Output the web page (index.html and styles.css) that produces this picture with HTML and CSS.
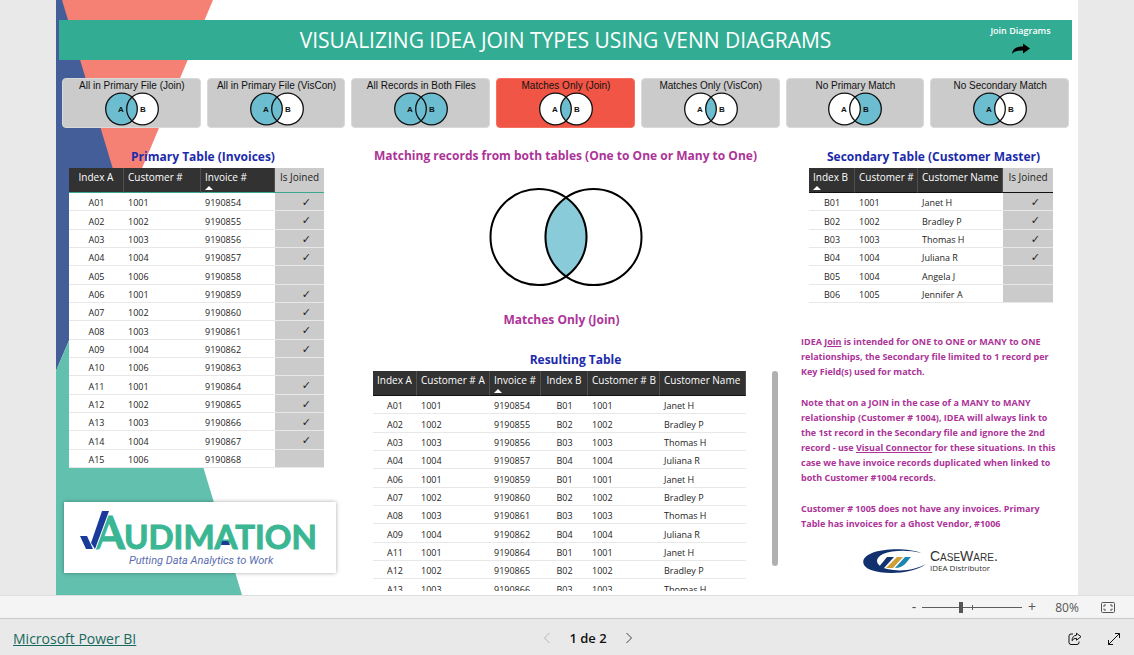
FILE: index.html
```html
<!DOCTYPE html>
<html lang="en">
<head>
<meta charset="utf-8">
<meta name="viewport" content="width=device-width, initial-scale=1">
<title>Visualizing IDEA Join Types</title>
<link rel="stylesheet" href="styles.css">
</head>
<body>
<svg class="defs" aria-hidden="true">
  <symbol id="venn" viewBox="0 0 56 34">
    <circle class="set-a" cx="17.5" cy="17" r="15.8"/>
    <circle class="set-b" cx="38.5" cy="17" r="15.8"/>
    <path class="both" d="M28 5.2A15.8 15.8 0 0 1 28 28.8A15.8 15.8 0 0 1 28 5.2Z"/>
    <circle class="ring" cx="17.5" cy="17" r="15.8"/>
    <circle class="ring" cx="38.5" cy="17" r="15.8"/>
  </symbol>
</svg>
<main class="stage">
  <div class="report">
    <svg class="backdrop" viewBox="0 0 190 595" aria-hidden="true">
      <path fill="#f58175" d="M5 0H157L68 211Z"/>
      <path fill="#435e98" d="M0 0H6L69 209L0 371Z"/>
      <path fill="#62c1ae" d="M0 371L69 209L186 595H0Z"/>
    </svg>

    <header class="banner">
      <h1>VISUALIZING IDEA JOIN TYPES USING VENN DIAGRAMS</h1>
      <button class="diagrams">
        <span>Join Diagrams</span>
        <svg viewBox="0 0 20 12" aria-hidden="true"><path d="M1 11C1.500 6 5 3.500 12 3.500V.5L19 5.500L12 10.500V7.500C7 7.300 3.500 8 1 11Z"/></svg>
      </button>
    </header>

    <nav class="joins">
      <button class="join fill-a fill-both"><span>All in Primary File (Join)</span><svg viewBox="0 0 56 34"><use href="#venn"/><text x="17" y="20">A</text><text x="39" y="20">B</text></svg></button>
      <button class="join fill-a fill-both"><span>All in Primary File (VisCon)</span><svg viewBox="0 0 56 34"><use href="#venn"/><text x="17" y="20">A</text><text x="39" y="20">B</text></svg></button>
      <button class="join fill-a fill-b fill-both"><span>All Records in Both Files</span><svg viewBox="0 0 56 34"><use href="#venn"/><text x="17" y="20">A</text><text x="39" y="20">B</text></svg></button>
      <button class="join fill-both selected"><span>Matches Only (Join)</span><svg viewBox="0 0 56 34"><use href="#venn"/><text x="17" y="20">A</text><text x="39" y="20">B</text></svg></button>
      <button class="join fill-both"><span>Matches Only (VisCon)</span><svg viewBox="0 0 56 34"><use href="#venn"/><text x="17" y="20">A</text><text x="39" y="20">B</text></svg></button>
      <button class="join fill-b"><span>No Primary Match</span><svg viewBox="0 0 56 34"><use href="#venn"/><text x="17" y="20">A</text><text x="39" y="20">B</text></svg></button>
      <button class="join fill-a"><span>No Secondary Match</span><svg viewBox="0 0 56 34"><use href="#venn"/><text x="17" y="20">A</text><text x="39" y="20">B</text></svg></button>
    </nav>

    <div class="columns">
      <section class="primary">
        <h2>Primary Table (Invoices)</h2>
        <table class="grid primary-grid">
          <colgroup><col class="w55"><col class="w77"><col class="w74"><col class="w49"></colgroup>
          <thead><tr><th class="mid">Index A</th><th>Customer #</th><th class="sorted">Invoice #</th><th class="flag">Is Joined</th></tr></thead>
          <tbody>
            <tr><td class="mid">A01</td><td>1001</td><td>9190854</td><td class="flag">✓</td></tr>
            <tr><td class="mid">A02</td><td>1002</td><td>9190855</td><td class="flag">✓</td></tr>
            <tr><td class="mid">A03</td><td>1003</td><td>9190856</td><td class="flag">✓</td></tr>
            <tr><td class="mid">A04</td><td>1004</td><td>9190857</td><td class="flag">✓</td></tr>
            <tr><td class="mid">A05</td><td>1006</td><td>9190858</td><td class="flag"></td></tr>
            <tr><td class="mid">A06</td><td>1001</td><td>9190859</td><td class="flag">✓</td></tr>
            <tr><td class="mid">A07</td><td>1002</td><td>9190860</td><td class="flag">✓</td></tr>
            <tr><td class="mid">A08</td><td>1003</td><td>9190861</td><td class="flag">✓</td></tr>
            <tr><td class="mid">A09</td><td>1004</td><td>9190862</td><td class="flag">✓</td></tr>
            <tr><td class="mid">A10</td><td>1006</td><td>9190863</td><td class="flag"></td></tr>
            <tr><td class="mid">A11</td><td>1001</td><td>9190864</td><td class="flag">✓</td></tr>
            <tr><td class="mid">A12</td><td>1002</td><td>9190865</td><td class="flag">✓</td></tr>
            <tr><td class="mid">A13</td><td>1003</td><td>9190866</td><td class="flag">✓</td></tr>
            <tr><td class="mid">A14</td><td>1004</td><td>9190867</td><td class="flag">✓</td></tr>
            <tr><td class="mid">A15</td><td>1006</td><td>9190868</td><td class="flag"></td></tr>
          </tbody>
        </table>
        <div class="audimation">
          <svg viewBox="0 0 272 71" role="img" aria-label="Audimation, Putting Data Analytics to Work">
            <text class="word initial" x="29" y="47">A</text>
            <text class="word" x="60" y="47">UDIMATION</text>
            <path fill="#1b3b9b" stroke="#fff" stroke-width="2" paint-order="stroke" d="M38 9H45L31 47L27 41ZM16 34H23L29 47H22Z"/>
            <path fill="#1b3b9b" d="M158 39H164L166 43H157Z"/>
            <text class="tag" x="65" y="62">Putting Data Analytics to Work</text>
          </svg>
        </div>
      </section>

      <section class="middle">
        <div class="diagram">
          <h2 class="plum">Matching records from both tables (One to One or Many to One)</h2>
          <svg class="big-venn" viewBox="0 0 154 98" role="img" aria-label="Venn diagram with the overlap filled">
            <path fill="#8acbda" d="M77 9A48 48 0 0 1 77 89A48 48 0 0 1 77 9Z"/>
            <circle cx="49.500" cy="49" r="48"/>
            <circle cx="104.500" cy="49" r="48"/>
          </svg>
          <h2 class="plum caption">Matches Only (Join)</h2>
        </div>
        <h2>Resulting Table</h2>
        <div class="result">
          <table class="grid result-grid">
            <colgroup><col class="w44"><col class="w73"><col class="w51"><col class="w47"><col class="w72"><col class="w86"></colgroup>
            <thead><tr><th class="mid">Index A</th><th>Customer # A</th><th class="sorted">Invoice #</th><th class="mid">Index B</th><th>Customer # B</th><th>Customer Name</th></tr></thead>
            <tbody>
              <tr><td class="mid">A01</td><td>1001</td><td>9190854</td><td class="mid">B01</td><td>1001</td><td>Janet H</td></tr>
              <tr><td class="mid">A02</td><td>1002</td><td>9190855</td><td class="mid">B02</td><td>1002</td><td>Bradley P</td></tr>
              <tr><td class="mid">A03</td><td>1003</td><td>9190856</td><td class="mid">B03</td><td>1003</td><td>Thomas H</td></tr>
              <tr><td class="mid">A04</td><td>1004</td><td>9190857</td><td class="mid">B04</td><td>1004</td><td>Juliana R</td></tr>
              <tr><td class="mid">A06</td><td>1001</td><td>9190859</td><td class="mid">B01</td><td>1001</td><td>Janet H</td></tr>
              <tr><td class="mid">A07</td><td>1002</td><td>9190860</td><td class="mid">B02</td><td>1002</td><td>Bradley P</td></tr>
              <tr><td class="mid">A08</td><td>1003</td><td>9190861</td><td class="mid">B03</td><td>1003</td><td>Thomas H</td></tr>
              <tr><td class="mid">A09</td><td>1004</td><td>9190862</td><td class="mid">B04</td><td>1004</td><td>Juliana R</td></tr>
              <tr><td class="mid">A11</td><td>1001</td><td>9190864</td><td class="mid">B01</td><td>1001</td><td>Janet H</td></tr>
              <tr><td class="mid">A12</td><td>1002</td><td>9190865</td><td class="mid">B02</td><td>1002</td><td>Bradley P</td></tr>
              <tr><td class="mid">A13</td><td>1003</td><td>9190866</td><td class="mid">B03</td><td>1003</td><td>Thomas H</td></tr>
            </tbody>
          </table>
          <div class="track"><div class="thumb"></div></div>
        </div>
      </section>

      <section class="secondary">
        <h2>Secondary Table (Customer Master)</h2>
        <table class="grid secondary-grid">
          <colgroup><col class="w46"><col class="w63"><col class="w85"><col class="w50"></colgroup>
          <thead><tr><th class="sorted">Index B</th><th>Customer #</th><th>Customer Name</th><th class="flag">Is Joined</th></tr></thead>
          <tbody>
            <tr><td class="mid">B01</td><td>1001</td><td>Janet H</td><td class="flag">✓</td></tr>
            <tr><td class="mid">B02</td><td>1002</td><td>Bradley P</td><td class="flag">✓</td></tr>
            <tr><td class="mid">B03</td><td>1003</td><td>Thomas H</td><td class="flag">✓</td></tr>
            <tr><td class="mid">B04</td><td>1004</td><td>Juliana R</td><td class="flag">✓</td></tr>
            <tr><td class="mid">B05</td><td>1004</td><td>Angela J</td><td class="flag"></td></tr>
            <tr><td class="mid">B06</td><td>1005</td><td>Jennifer A</td><td class="flag"></td></tr>
          </tbody>
        </table>
        <div class="notes">
          <p>IDEA <u>Join</u> is intended for ONE to ONE or MANY to ONE<br>relationships, the Secondary file limited to 1 record per<br>Key Field(s) used for match.</p>
          <p>Note that on a JOIN in the case of a MANY to MANY<br>relationship (Customer # 1004), IDEA will always link to<br>the 1st record in the Secondary file and ignore the 2nd<br>record - use <u>Visual Connector</u> for these situations. In this<br>case we have invoice records duplicated when linked to<br>both Customer #1004 records.</p>
          <p>Customer # 1005 does not have any invoices. Primary<br>Table has invoices for a Ghost Vendor, #1006</p>
        </div>
        <div class="caseware">
          <svg viewBox="0 0 64 24" aria-hidden="true">
            <path fill="#12306e" d="M58 4C46-1 22-1 9 4C-3 9-2 17 8 21C22 26 50 25 63 15C52 21 38 23 24 20C12 17 11 9 20 5C30 1 46 1 58 4Z"/>
            <path fill="#12306e" d="M24 8H31L21 19H15Z"/>
            <path fill="#cf9f37" d="M34 8H40L30 19H23Z"/>
            <path fill="#1b86b0" d="M42 8H48C44 12 42 18 33 19H32Z"/>
          </svg>
          <div class="brand"><span class="brand-name">CaseWare.</span><span class="brand-role">IDEA Distributor</span></div>
        </div>
      </section>
    </div>
  </div>
</main>

<div class="zoombar">
  <button class="step" aria-label="Zoom out">-</button>
  <input class="zoom" type="range" min="0" max="100" value="39" aria-label="Zoom level">
  <button class="step" aria-label="Zoom in">+</button>
  <span class="percent">80%</span>
  <button class="fit" aria-label="Fit to page">
    <svg viewBox="0 0 14 11"><rect x=".5" y=".5" width="13" height="10" rx="1"/><path d="M5 3H3V5M9 3H11V5M5 8H3V6.500M9 8H11V6.500"/></svg>
  </button>
</div>

<footer class="status">
  <a href="#">Microsoft Power BI</a>
  <div class="pager">
    <button aria-label="Previous page" disabled><svg viewBox="0 0 8 12"><path d="M6.500 1L1.500 6L6.500 11"/></svg></button>
    <span>1 de 2</span>
    <button aria-label="Next page"><svg viewBox="0 0 8 12"><path d="M1.500 1L6.500 6L1.500 11"/></svg></button>
  </div>
  <div class="actions">
    <button aria-label="Share"><svg viewBox="0 0 14 14"><path d="M5 2H3Q1 2 1 4V10.500Q1 12.500 3 12.500H9Q11 12.500 11 10.500V9.500M8.500 1.200L13 4.700L8.500 8.200V6.300Q5.500 6.200 4 8.700Q4.200 3.700 8.500 3.200Z"/></svg></button>
    <button aria-label="Full screen"><svg viewBox="0 0 14 14"><path d="M1.500 12.500L12.500 1.500M8 1.500H12.500V6M1.500 8V12.500H6"/></svg></button>
  </div>
</footer>
</body>
</html>
```
FILE: styles.css
```css
* { box-sizing: border-box; }

body {
  margin: 0;
  height: 100vh;
  display: flex;
  flex-direction: column;
  background: #e9e9e9;
  font-family: "Open Sans", "Noto Sans", sans-serif;
  color: #252423;
}

button {
  border: 0;
  padding: 0;
  background: none;
  font: inherit;
  color: inherit;
}

h1, h2, p { margin: 0; }

.defs {
  position: absolute;
  width: 0;
  height: 0;
}

.stage {
  flex: 1;
  min-height: 0;
  padding: 0 56px;
  overflow: hidden;
}

.report {
  position: relative;
  display: flex;
  flex-direction: column;
  height: 100%;
  padding: 20px 6px 4px 3px;
  background: #fff;
}

.backdrop {
  position: absolute;
  left: 0;
  top: 0;
  width: 190px;
  height: 595px;
}

/* Banner */
.banner {
  position: relative;
  display: grid;
  grid-template-columns: 103px 1fr 103px;
  flex: none;
  height: 40px;
  background: #32ad93;
  color: #fff;
}

.banner h1 {
  grid-column: 2;
  font-size: 21px;
  line-height: 40px;
  font-weight: 400;
  text-align: center;
  white-space: nowrap;
}

.diagrams {
  display: flex;
  flex-direction: column;
  align-items: center;
  padding-top: 3px;
  font-size: 9px;
  line-height: 16px;
  font-weight: 600;
}

.diagrams svg {
  width: 20px;
  height: 12px;
  margin-top: 4px;
  fill: #000;
}

/* Join type buttons */
.joins {
  position: relative;
  display: grid;
  grid-template-columns: repeat(7, 1fr);
  gap: 6px;
  flex: none;
  margin: 18px 3px 0;
}

.join {
  display: flex;
  flex-direction: column;
  align-items: center;
  height: 50px;
  padding: 1px 0 0 1px;
  border: 1px solid #d9d9d9;
  border-radius: 4px;
  background: #cbcbcb;
  font-family: "Liberation Sans", Arial, sans-serif;
  font-size: 10px;
  line-height: 12px;
  color: #111;
  white-space: nowrap;
  --a: #fff;
  --b: #fff;
  --both: #fff;
}

.join svg {
  width: 56px;
  height: 34px;
}

.join text {
  font-size: 8px;
  font-weight: 700;
  text-anchor: middle;
  fill: #111;
}

.selected {
  background: #f15545;
  border-color: #f4705f;
}

.fill-a { --a: #6dbdd0; }
.fill-b { --b: #6dbdd0; }
.fill-both { --both: #6dbdd0; }

.set-a { fill: var(--a); }
.set-b { fill: var(--b); }
.both { fill: var(--both); }

.ring {
  fill: none;
  stroke: #111;
  stroke-width: 1.300;
}

/* Columns */
.columns {
  position: relative;
  display: grid;
  grid-template-columns: 278px 1fr 271px;
  flex: 1;
  min-height: 0;
}

.columns h2 {
  font-size: 12px;
  line-height: 18px;
  font-weight: 700;
  color: #1c2bac;
  text-align: center;
  white-space: nowrap;
}

.columns .plum { color: #ac3498; }

.primary {
  display: flex;
  flex-direction: column;
  padding: 20px 0 0 10px;
}

/* Tables */
.grid {
  border-collapse: separate;
  border-spacing: 0;
  table-layout: fixed;
  font-size: 9px;
  line-height: 15px;
  background: #fff;
}

.grid th {
  height: 25px;
  padding: 0 0 0 4px;
  vertical-align: top;
  text-align: left;
  font-size: 10px;
  line-height: 18px;
  font-weight: 500;
  color: #fff;
  background: #323232;
  border-right: 1px solid #505050;
  border-bottom: 1px solid #111;
  white-space: nowrap;
}

.grid td {
  height: 18px;
  padding: 2px 0 0 4px;
  border-bottom: 1px solid #e8e8e8;
  white-space: nowrap;
}

.grid tr:nth-child(3n+2) td { height: 19px; }

.grid th.mid {
  padding: 0;
  text-align: center;
}

.grid td.mid {
  padding: 2px 0 0;
  text-align: center;
}

.grid th.flag {
  padding: 0;
  text-align: center;
  font-weight: 400;
  color: #252423;
  background: #cbcbcb;
  border-right: 0;
}

.grid td.flag {
  padding: 1px 13px 0 0;
  text-align: right;
  font-family: "DejaVu Sans", sans-serif;
  font-size: 11px;
  font-weight: 700;
  background: #cbcbcb;
}

.sorted::after {
  content: "";
  display: block;
  width: 0;
  border: 4px solid transparent;
  border-top: 0;
  border-bottom-color: #fff;
}

.w44 { width: 44px; }
.w46 { width: 46px; }
.w47 { width: 47px; }
.w49 { width: 49px; }
.w50 { width: 50px; }
.w51 { width: 51px; }
.w55 { width: 55px; }
.w63 { width: 63px; }
.w72 { width: 72px; }
.w73 { width: 73px; }
.w74 { width: 74px; }
.w77 { width: 77px; }
.w85 { width: 85px; }
.w86 { width: 86px; }

.primary-grid {
  width: 255px;
  margin-top: 2px;
}

.primary-grid th { border-bottom-color: #3aa793; }

/* Audimation logo */
.audimation {
  width: 272px;
  margin: 34px 0 0 -5px;
  background: #fff;
  box-shadow: 0 0 4px rgba(0, 0, 0, 0.35);
}

.audimation svg {
  display: block;
  width: 272px;
  height: 71px;
}

.word {
  font: 700 33px Lato, sans-serif;
  fill: #3bb693;
  stroke: #3bb693;
}

.initial { font-size: 46px; }

.tag {
  font: italic 400 11px Roboto, sans-serif;
  fill: #5b6db0;
}

/* Middle column */
.middle {
  display: flex;
  flex-direction: column;
  min-height: 0;
  padding: 19px 23px 0 36px;
}

.diagram {
  display: flex;
  flex-direction: column;
  align-items: center;
  padding-right: 20px;
}

.big-venn {
  width: 154px;
  height: 98px;
  margin-top: 23px;
}

.big-venn circle {
  fill: none;
  stroke: #000;
  stroke-width: 2;
}

.columns .caption {
  margin: 25px 0 22px;
  padding-right: 8px;
}

.result {
  display: flex;
  justify-content: space-between;
  flex: 1;
  min-height: 0;
  margin-top: 2px;
  overflow: hidden;
}

.result-grid {
  align-self: flex-start;
  width: 373px;
}

.track { width: 6px; }

.thumb {
  height: 195px;
  border-radius: 3px;
  background: #b0b0b0;
}

/* Secondary column */
.secondary {
  display: flex;
  flex-direction: column;
  padding-top: 20px;
}

.secondary h2 { padding-right: 6px; }

.secondary-grid {
  width: 244px;
  margin: 2px 0 0 8px;
}

.notes {
  margin-top: 31px;
  font-size: 9px;
  line-height: 15px;
  font-weight: 700;
  color: #ac3498;
  white-space: nowrap;
}

.notes p + p { margin-top: 16px; }

.caseware {
  display: flex;
  align-items: center;
  gap: 3px;
  margin: 18px 0 0 62px;
}

.caseware svg {
  width: 64px;
  height: 24px;
}

.brand {
  display: flex;
  flex-direction: column;
  font-size: 8px;
  line-height: 10px;
  color: #333;
}

.brand-name {
  font-family: "Liberation Sans", Arial, sans-serif;
  font-size: 14px;
  line-height: 14px;
  font-variant: small-caps;
}

/* Zoom bar */
.zoombar {
  display: flex;
  align-items: center;
  justify-content: flex-end;
  flex: none;
  height: 24px;
  padding-right: 19px;
  background: #f4f4f4;
  border-top: 1px solid #dedede;
  border-bottom: 1px solid #c8c8c8;
  font-size: 12px;
  color: #555;
}

.step {
  width: 14px;
  font-size: 14px;
  line-height: 20px;
}

.zoom {
  appearance: none;
  width: 100px;
  height: 12px;
  margin: 0 3px 0 1px;
  background:
    linear-gradient(#605e5c, #605e5c) 50px 50% / 1px 5px no-repeat,
    linear-gradient(#605e5c, #605e5c) 0 50% / 100% 1px no-repeat;
}

.zoom::-webkit-slider-thumb {
  appearance: none;
  width: 4px;
  height: 11px;
  background: #555;
}

.percent {
  width: 40px;
  margin-left: 8px;
  text-align: center;
}

.fit {
  display: flex;
  margin-left: 14px;
}

.fit svg {
  width: 14px;
  height: 11px;
  fill: none;
  stroke: #555;
}

/* Status bar */
.status {
  display: grid;
  grid-template-columns: 1fr auto 1fr;
  align-items: center;
  flex: none;
  height: 36px;
  padding: 2px 13px 0;
  font-size: 14px;
}

.status a { color: #17695f; }

.pager {
  display: flex;
  align-items: center;
  gap: 18px;
  padding-left: 42px;
  font-size: 13px;
  font-weight: 600;
  color: #111;
}

.status button { display: flex; }

.pager svg {
  width: 8px;
  height: 12px;
  fill: none;
  stroke: #444;
}

.pager button:disabled svg { stroke: #b5b5b5; }

.actions {
  display: flex;
  justify-content: flex-end;
  gap: 25px;
  padding-top: 1px;
}

.actions svg {
  width: 14px;
  height: 14px;
  fill: none;
  stroke: #111;
}
```
